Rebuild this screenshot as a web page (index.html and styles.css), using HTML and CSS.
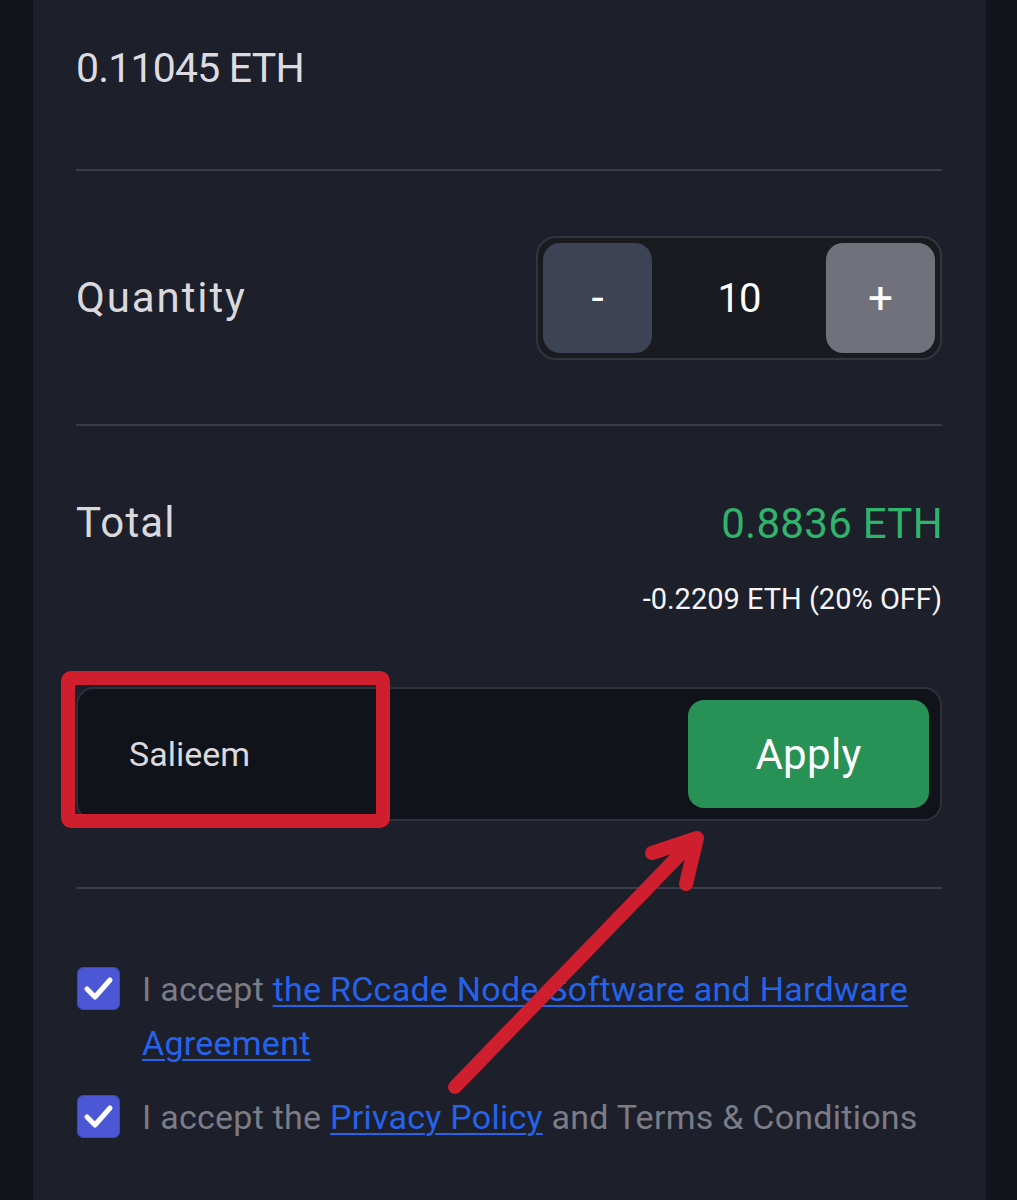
FILE: index.html
```html
<!DOCTYPE html>
<html lang="en">
<head>
<meta charset="utf-8">
<title>Checkout</title>
<link rel="stylesheet" href="styles.css">
</head>
<body>
<div class="page">
  <main class="panel">
    <section class="price-row">
      <div class="price">0.11045 ETH</div>
    </section>
    <section class="qty-row">
      <div class="label label-qty">Quantity</div>
      <div class="stepper">
        <button class="step step-minus">-</button>
        <div class="step-value">10</div>
        <button class="step step-plus">+</button>
      </div>
    </section>
    <section class="total-row">
      <div class="total-line">
        <div class="label label-total">Total</div>
        <div class="total-value">0.8836 ETH</div>
      </div>
      <div class="discount">-0.2209 ETH (20% OFF)</div>
      <div class="coupon">
        <div class="coupon-input">Salieem</div>
        <button class="apply">Apply</button>
      </div>
    </section>
    <section class="terms">
      <div class="check-row">
        <span class="checkbox"><svg viewBox="0 0 43 43" width="43" height="43"><path d="M10 22 L18 30 L33 13" fill="none" stroke="#fff" stroke-width="5" stroke-linecap="round" stroke-linejoin="round"/></svg></span>
        <p class="check-text">I accept <a href="#">the RCcade Node Software and Hardware Agreement</a></p>
      </div>
      <div class="check-row">
        <span class="checkbox"><svg viewBox="0 0 43 43" width="43" height="43"><path d="M10 22 L18 30 L33 13" fill="none" stroke="#fff" stroke-width="5" stroke-linecap="round" stroke-linejoin="round"/></svg></span>
        <p class="check-text">I accept the <a href="#">Privacy Policy</a> and Terms &amp; Conditions</p>
      </div>
    </section>
  </main>
  <svg class="annotation" viewBox="0 0 1017 1200" width="1017" height="1200">
    <rect x="68" y="678" width="315" height="143" rx="3" fill="none" stroke="#cf1f2e" stroke-width="14"/>
    <path d="M455 1087 L692 842" fill="none" stroke="#cf1f2e" stroke-width="14" stroke-linecap="round"/>
    <path d="M652 853 L697 838 L686 884" fill="none" stroke="#cf1f2e" stroke-width="14" stroke-linecap="round" stroke-linejoin="round"/>
  </svg>
</div>
</body>
</html>
```
FILE: styles.css
```css
* { box-sizing: border-box; }
html, body { margin: 0; padding: 0; }
body {
  background: #12141b;
  font-family: Roboto, "Liberation Sans", sans-serif;
  font-weight: 400;
  color: #dcdce0;
}
.page {
  position: relative;
  width: 1017px;
  height: 1200px;
  overflow: hidden;
}
.panel {
  margin-left: 33px;
  width: 953px;
  height: 1200px;
  background: #1d1f2b;
  padding: 0 44px 0 43px;
}
.price-row {
  padding-top: 40px;
  height: 171px;
  border-bottom: 2px solid #383b48;
}
.price {
  font-size: 41px;
  line-height: 56px;
  letter-spacing: -0.8px;
  color: #dcdce0;
}
.qty-row {
  display: flex;
  align-items: center;
  justify-content: space-between;
  padding: 65px 0 64px;
  border-bottom: 2px solid #383b48;
}
.label {
  font-size: 42px;
  line-height: 56px;
  color: #d9d9dd;
}
.label-qty { letter-spacing: 1.9px; }
.label-total { letter-spacing: 1.2px; }
.stepper {
  width: 406px;
  height: 124px;
  border: 2px solid #34353c;
  border-radius: 20px;
  background: #1a1b21;
  padding: 5px;
  display: flex;
  align-items: center;
  justify-content: space-between;
}
.step {
  width: 109px;
  height: 110px;
  border: 0;
  border-radius: 17px;
  color: #ffffff;
  font-family: inherit;
  font-size: 44px;
  line-height: 1;
  padding: 0;
  display: flex;
  align-items: center;
  justify-content: center;
}
.step-minus { background: #3d4354; }
.step-plus { background: #70717a; }
.step-value {
  font-size: 40px;
  letter-spacing: -1px;
  color: #ffffff;
}
.total-row {
  padding-top: 75px;
  padding-bottom: 66px;
  border-bottom: 2px solid #383b48;
}
.total-line {
  display: flex;
  justify-content: space-between;
  align-items: center;
  height: 44px;
}
.total-value {
  font-size: 42px;
  letter-spacing: 0.3px;
  color: #30b46b;
  margin-right: -1px;
}
.discount {
  margin-top: 36px;
  text-align: right;
  font-size: 29px;
  line-height: 36px;
  color: #f5f5f7;
}
.coupon {
  margin-top: 70px;
  height: 134px;
  border: 2px solid #2e3039;
  border-radius: 18px;
  background: #11131b;
  padding: 11px;
  display: flex;
  align-items: center;
  justify-content: space-between;
}
.coupon-input {
  padding-left: 40px;
  font-size: 34px;
  color: #dadade;
}
.apply {
  width: 241px;
  height: 108px;
  border: 0;
  border-radius: 16px;
  background: #289155;
  color: #ffffff;
  font-family: inherit;
  font-size: 42px;
  letter-spacing: 0.3px;
}
.terms {
  padding-top: 73px;
  display: flex;
  flex-direction: column;
  gap: 20px;
}
.check-row {
  display: flex;
  align-items: flex-start;
  gap: 22px;
}
.checkbox {
  flex: none;
  width: 43px;
  height: 43px;
  margin-top: 5px;
  margin-left: 1px;
  border-radius: 7px;
  background: #4c57d6;
  box-shadow: inset 0 0 0 1px #3f48b3;
  display: block;
}
.checkbox svg { display: block; }
.check-text {
  margin: 0;
  font-size: 34px;
  line-height: 54px;
  letter-spacing: 0.25px;
  color: #7b7c86;
}
.check-text a {
  color: #2563eb;
  text-decoration: underline;
  text-decoration-thickness: 2px;
  text-underline-offset: 4px;
}
.annotation {
  position: absolute;
  left: 0;
  top: 0;
  pointer-events: none;
}
```
